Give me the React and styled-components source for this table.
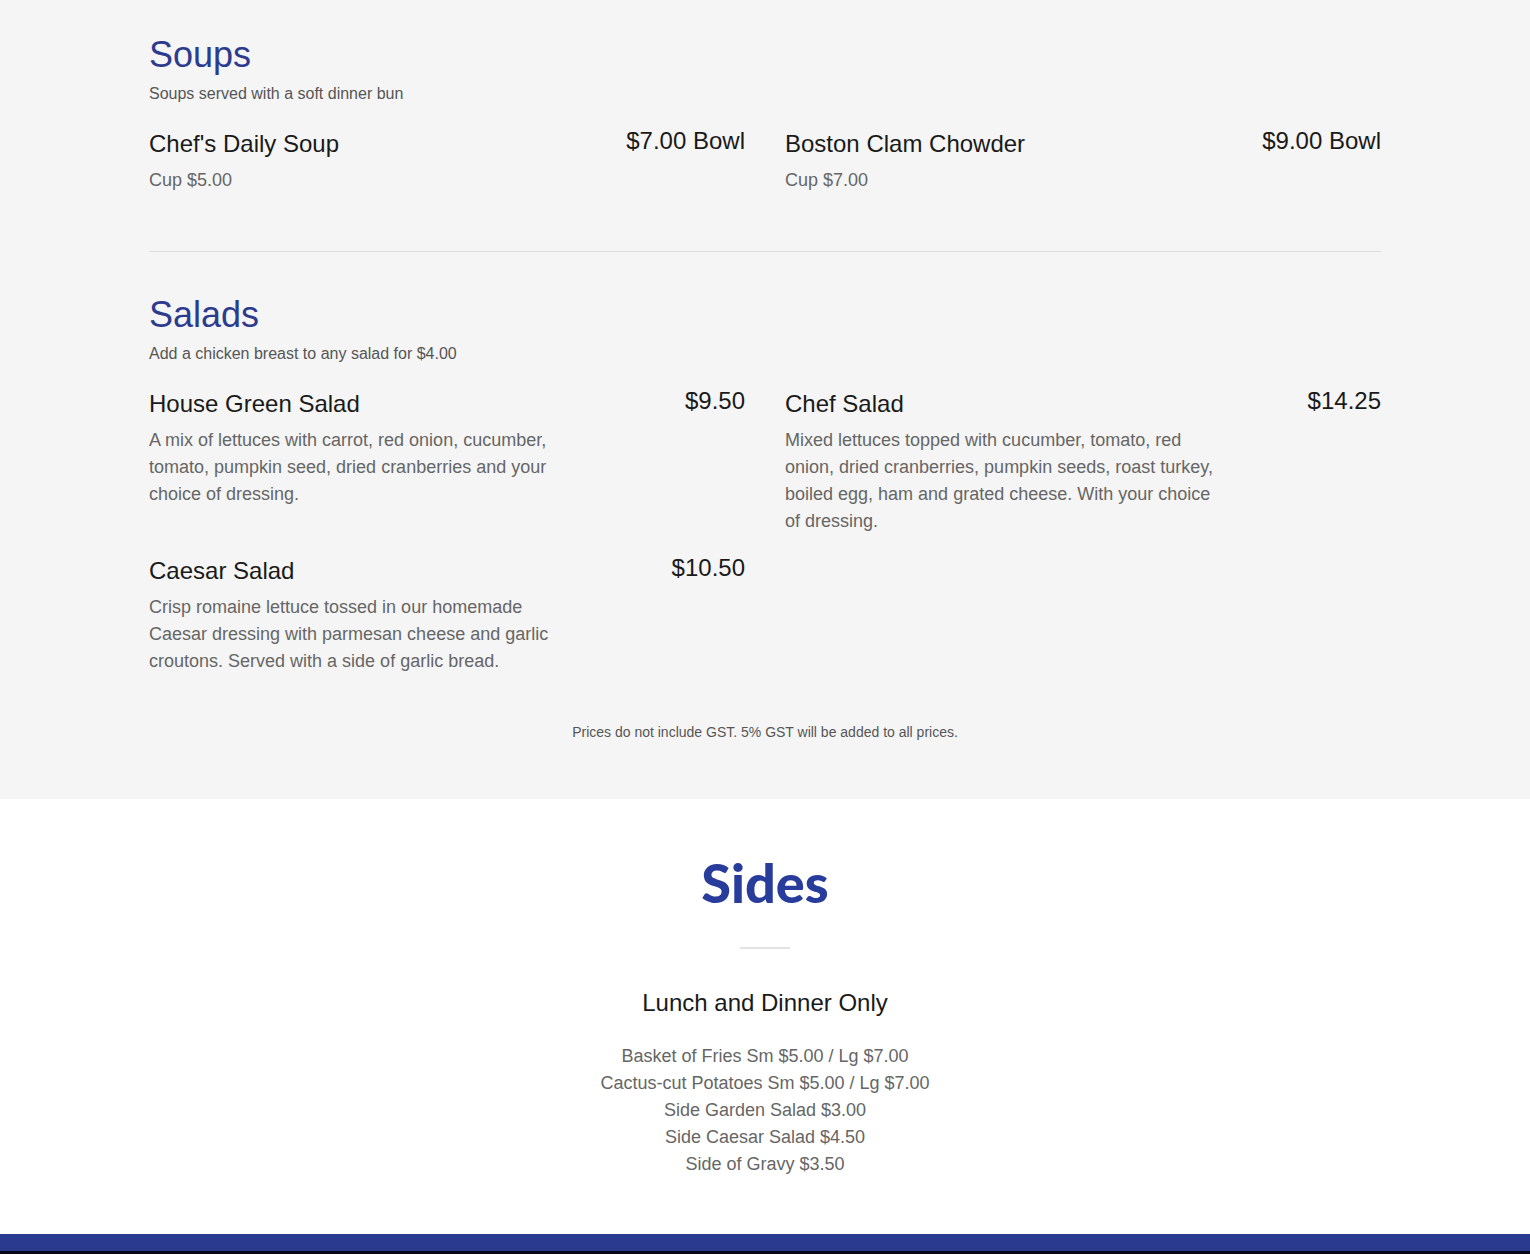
import React from 'react';
import styled, { createGlobalStyle } from 'styled-components';

const GlobalStyle = createGlobalStyle`
  * {
    box-sizing: border-box;
  }

  body {
    margin: 0;
    padding: 0;
    font-family: 'Liberation Sans', Arial, sans-serif;
    background: #ffffff;
    color: #1a1a1a;
  }
`;

const MenuBand = styled.div`
  background: #f5f5f5;
  padding: 33px 0 58px;
`;

const Container = styled.div`
  width: 1232px;
  margin: 0 auto;
`;

const Section = styled.section`
  padding: ${(p) => (p.first ? '0' : '41px')} 0 ${(p) => (p.last ? '0' : '57px')};
  border-bottom: ${(p) => (p.last ? 'none' : '1px solid #dddddd')};
`;

const SectionTitle = styled.h2`
  margin: 0;
  font-size: 36px;
  line-height: 43px;
  font-weight: 400;
  color: #2d3b8e;
`;

const SectionNote = styled.p`
  margin: 8px 0 0;
  font-size: 16px;
  line-height: 19px;
  color: #555555;
`;

const ItemGrid = styled.div`
  display: grid;
  grid-template-columns: 1fr 1fr;
  column-gap: 40px;
  row-gap: 21px;
  margin-top: 26px;
`;

const Item = styled.div`
  display: grid;
  grid-template-columns: 1fr auto;
  align-items: start;
  align-content: start;
`;

const ItemName = styled.h3`
  margin: 0;
  font-size: 24px;
  line-height: 29px;
  font-weight: 400;
  color: #1a1a1a;
`;

const ItemPrice = styled.div`
  font-size: 24px;
  line-height: 24px;
  color: #1a1a1a;
  text-align: right;
`;

const ItemDesc = styled.p`
  grid-column: 1 / -1;
  margin: 9px 0 0;
  max-width: 432px;
  font-size: 18px;
  line-height: 27px;
  color: #666666;
`;

const TaxNote = styled.p`
  margin: 49px 0 0;
  text-align: center;
  font-size: 14px;
  line-height: 17px;
  color: #555555;
`;

const SidesBand = styled.div`
  background: #ffffff;
  padding: 52px 0 56px;
  text-align: center;
`;

const SidesTitle = styled.h2`
  margin: 0;
  font-family: Lato, 'Liberation Sans', sans-serif;
  font-size: 54px;
  line-height: 64px;
  font-weight: 900;
  color: #283c9b;
`;

const ShortRule = styled.hr`
  width: 50px;
  margin: 32px auto 0;
  border: none;
  border-top: 2px solid #e2e2e2;
`;

const SidesSubtitle = styled.h3`
  margin: 39px 0 0;
  font-size: 24px;
  line-height: 29px;
  font-weight: 400;
  color: #1a1a1a;
`;

const SidesList = styled.ul`
  list-style: none;
  margin: 26px 0 0;
  padding: 0;
  font-size: 18px;
  line-height: 27px;
  color: #666666;
`;

const Footer = styled.footer`
  height: 20px;
  background: #2a3b8f;
  border-bottom: 3px solid #07071a;
`;

const menu = [
  {
    title: 'Soups',
    note: 'Soups served with a soft dinner bun',
    items: [
      { name: "Chef's Daily Soup", price: '$7.00 Bowl', desc: 'Cup $5.00' },
      { name: 'Boston Clam Chowder', price: '$9.00 Bowl', desc: 'Cup $7.00' },
    ],
  },
  {
    title: 'Salads',
    note: 'Add a chicken breast to any salad for $4.00',
    items: [
      {
        name: 'House Green Salad',
        price: '$9.50',
        desc: 'A mix of lettuces with carrot, red onion, cucumber, tomato, pumpkin seed, dried cranberries and your choice of dressing.',
      },
      {
        name: 'Chef Salad',
        price: '$14.25',
        desc: 'Mixed lettuces topped with cucumber, tomato, red onion, dried cranberries, pumpkin seeds, roast turkey, boiled egg, ham and grated cheese. With your choice of dressing.',
      },
      {
        name: 'Caesar Salad',
        price: '$10.50',
        desc: 'Crisp romaine lettuce tossed in our homemade Caesar dressing with parmesan cheese and garlic croutons. Served with a side of garlic bread.',
      },
    ],
  },
];

const sides = [
  'Basket of Fries Sm $5.00 / Lg $7.00',
  'Cactus-cut Potatoes Sm $5.00 / Lg $7.00',
  'Side Garden Salad $3.00',
  'Side Caesar Salad $4.50',
  'Side of Gravy $3.50',
];

function App() {
  return (
    <>
      <GlobalStyle />
      <MenuBand>
        <Container>
          {menu.map((section, i) => (
            <Section key={section.title} first={i === 0} last={i === menu.length - 1}>
              <SectionTitle>{section.title}</SectionTitle>
              <SectionNote>{section.note}</SectionNote>
              <ItemGrid>
                {section.items.map((item) => (
                  <Item key={item.name}>
                    <ItemName>{item.name}</ItemName>
                    <ItemPrice>{item.price}</ItemPrice>
                    <ItemDesc>{item.desc}</ItemDesc>
                  </Item>
                ))}
              </ItemGrid>
            </Section>
          ))}
          <TaxNote>Prices do not include GST. 5% GST will be added to all prices.</TaxNote>
        </Container>
      </MenuBand>

      <SidesBand>
        <SidesTitle>Sides</SidesTitle>
        <ShortRule />
        <SidesSubtitle>Lunch and Dinner Only</SidesSubtitle>
        <SidesList>
          {sides.map((s) => (
            <li key={s}>{s}</li>
          ))}
        </SidesList>
      </SidesBand>

      <Footer />
    </>
  );
}

export default App;
